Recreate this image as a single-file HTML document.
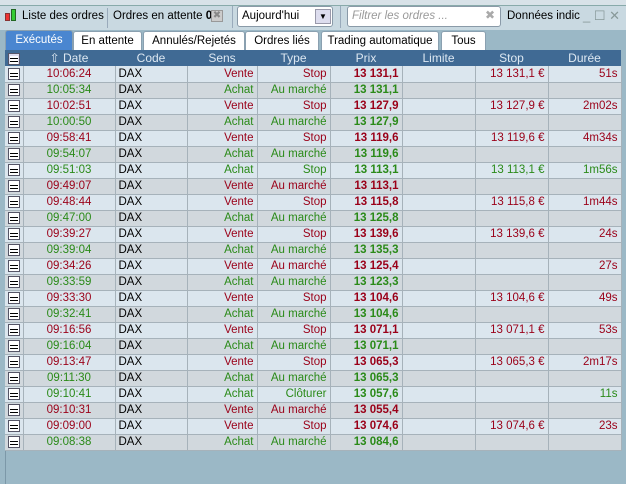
<!DOCTYPE html><html><head><meta charset="utf-8"><style>
*{box-sizing:border-box;margin:0;padding:0}
body{width:626px;height:484px;background:#9bb8c6;font-family:"Liberation Sans",Arial,sans-serif;font-size:11px;position:relative;overflow:hidden}
.a{position:absolute}
.top{left:0;top:0;width:626px;height:6px;background:#d8e2e8;border-bottom:1px solid #8aa}
.bar{left:0;top:6px;width:626px;height:24px;background:#c9d9e1;font-size:11.5px}
.tab{position:absolute;top:31px;height:19px;background:#fff;border:1px solid #8aa0b0;border-bottom:none;border-radius:3px 3px 0 0;text-align:center;line-height:18px;color:#000;font-size:11.5px}
.tab.on{background:#4a86d0;color:#fff;top:30px;height:20px}
table{position:absolute;left:5px;top:50px;border-collapse:collapse;table-layout:fixed;width:616px}
td,th{height:16px;padding:0 3px;white-space:nowrap;overflow:hidden;border-right:1px solid #a6b2ba;border-bottom:1px solid #a6b2ba;font-size:11.5px}
th{background:#406a94;color:#dde8f2;font-weight:normal;border-right:none;border-bottom:none;text-align:center;position:relative;font-size:12px}
th+th:before{content:"";position:absolute;left:-1px;top:5px;width:1px;height:7px;background:#dde8f2}
tr.l td{background:#dbe6ee}tr.d td{background:#d1d8dd}
.r{color:#9a0018}.g{color:#2a8a18}
.rt{text-align:right}.c{text-align:center}.b{font-weight:bold}
.ic{display:inline-block;width:12px;height:12px;border:1px solid #556;background:#fff;vertical-align:middle;background-image:repeating-linear-gradient(#fff 0 2px,#000 2px 3px);background-size:8px 9px;background-position:1px 2px;background-repeat:no-repeat}
</style></head><body>
<div class="a top"></div>
<div class="a bar">
 <div class="a" style="left:5px;top:7px;width:5px;height:8px;background:#e33;border:1px solid #833"></div>
 <div class="a" style="left:11px;top:3px;width:5px;height:12px;background:#3c3;border:1px solid #262"></div>
 <div class="a" style="left:22px;top:4px">Liste des ordres</div>
 <div class="a" style="left:107px;top:2px;width:1px;height:20px;background:#9ab"></div>
 <div class="a" style="left:113px;top:4px">Ordres en attente <b>0</b></div>
 <div class="a" style="left:211px;top:4px;width:12px;height:12px;background:#ccc;border:1px solid #999;color:#888;font-size:10px;line-height:10px;text-align:center">✖</div>
 <div class="a" style="left:232px;top:0px;width:1px;height:22px;background:#9ab"></div>
 <div class="a" style="left:237px;top:0px;width:96px;height:21px;background:#fff;border:1px solid #8a9aa8;border-radius:3px;padding:3px 4px">Aujourd'hui</div>
 <div class="a" style="left:315px;top:3px;width:16px;height:15px;background:#dde;border:1px solid #99a;font-size:8px;text-align:center;line-height:14px">▼</div>
 <div class="a" style="left:340px;top:0px;width:1px;height:22px;background:#9ab"></div>
 <div class="a" style="left:347px;top:0px;width:154px;height:21px;background:#fff;border:1px solid #8a9aa8;border-radius:3px;padding:3px 4px;color:#999;font-style:italic">Filtrer les ordres ...</div>
 <div class="a" style="left:485px;top:2px;color:#aaa;font-size:12px">✖</div>
 <div class="a" style="left:507px;top:4px">Données indic</div>
 <div class="a" style="left:583px;top:2px;color:#899;font-size:13px">_ ☐ ✕</div>
</div>
<div class="tab on" style="left:5px;width:68px">Exécutés</div>
<div class="tab" style="left:73px;width:69px">En attente</div>
<div class="tab" style="left:143px;width:102px">Annulés/Rejetés</div>
<div class="tab" style="left:245px;width:74px">Ordres liés</div>
<div class="tab" style="left:321px;width:118px">Trading automatique</div>
<div class="tab" style="left:441px;width:45px">Tous</div>
<table>
<colgroup><col style="width:18px"><col style="width:92px"><col style="width:72px"><col style="width:70px"><col style="width:73px"><col style="width:72px"><col style="width:73px"><col style="width:73px"><col style="width:73px"></colgroup>
<tr><th><span class="ic" style="background-color:#dde"></span></th><th>⇧ Date</th><th>Code</th><th>Sens</th><th>Type</th><th>Prix</th><th>Limite</th><th>Stop</th><th>Durée</th></tr>
<tbody id="tb"></tbody>
</table>
<div class="a" style="left:5px;top:451px;width:616px;height:33px;border-left:1px solid #7c98a8"></div>
<script>
var d=[["10:06:24","V","Stop","13 131,1","13 131,1 €","51s"],["10:05:34","A","Au marché","13 131,1","",""],["10:02:51","V","Stop","13 127,9","13 127,9 €","2m02s"],["10:00:50","A","Au marché","13 127,9","",""],["09:58:41","V","Stop","13 119,6","13 119,6 €","4m34s"],["09:54:07","A","Au marché","13 119,6","",""],["09:51:03","A","Stop","13 113,1","13 113,1 €","1m56s"],["09:49:07","V","Au marché","13 113,1","",""],["09:48:44","V","Stop","13 115,8","13 115,8 €","1m44s"],["09:47:00","A","Au marché","13 125,8","",""],["09:39:27","V","Stop","13 139,6","13 139,6 €","24s"],["09:39:04","A","Au marché","13 135,3","",""],["09:34:26","V","Au marché","13 125,4","","27s"],["09:33:59","A","Au marché","13 123,3","",""],["09:33:30","V","Stop","13 104,6","13 104,6 €","49s"],["09:32:41","A","Au marché","13 104,6","",""],["09:16:56","V","Stop","13 071,1","13 071,1 €","53s"],["09:16:04","A","Au marché","13 071,1","",""],["09:13:47","V","Stop","13 065,3","13 065,3 €","2m17s"],["09:11:30","A","Au marché","13 065,3","",""],["09:10:41","A","Clôturer","13 057,6","","11s"],["09:10:31","V","Au marché","13 055,4","",""],["09:09:00","V","Stop","13 074,6","13 074,6 €","23s"],["09:08:38","A","Au marché","13 084,6","",""]];
var h="";d.forEach(function(r,i){var c=r[1]=="V"?"r":"g";h+='<tr class="'+(i%2?"d":"l")+'"><td class="c"><span class="ic"></span></td><td class="c '+c+'">'+r[0]+'</td><td>DAX</td><td class="rt '+c+'">'+(r[1]=="V"?"Vente":"Achat")+'</td><td class="rt '+c+'">'+r[2]+'</td><td class="rt b '+c+'">'+r[3]+'</td><td></td><td class="rt '+c+'">'+r[4]+'</td><td class="rt '+c+'">'+r[5]+'</td></tr>';});
document.getElementById("tb").innerHTML=h;
</script>
</body></html>
